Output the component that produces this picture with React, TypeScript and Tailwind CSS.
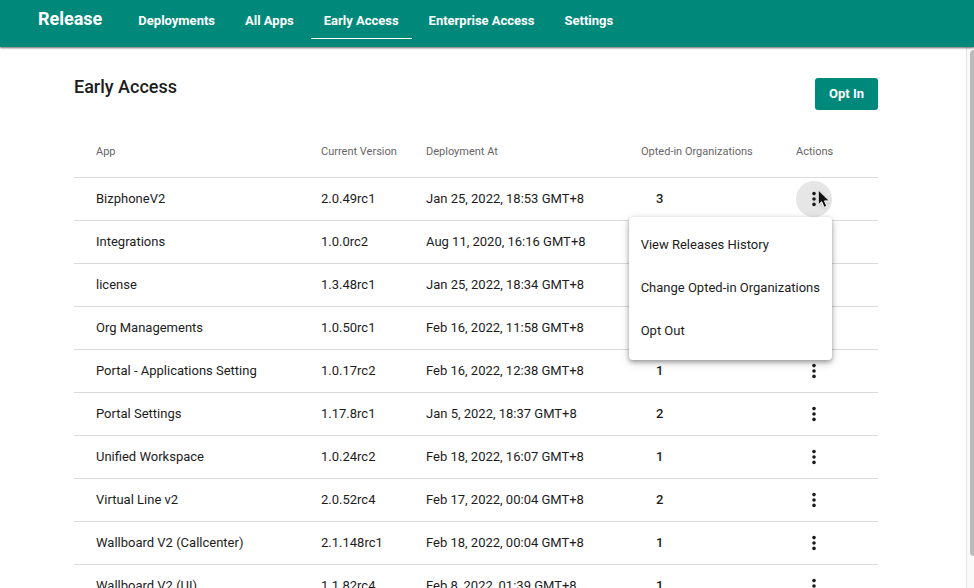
import clsx from 'clsx'

interface Deployment {
  app: string
  version: string
  deployedAt: string
  organizations: number
}

const navItems = ['Deployments', 'All Apps', 'Early Access', 'Enterprise Access', 'Settings']

const menuItems = ['View Releases History', 'Change Opted-in Organizations', 'Opt Out']

const deployments: Deployment[] = [
  { app: 'BizphoneV2', version: '2.0.49rc1', deployedAt: 'Jan 25, 2022, 18:53 GMT+8', organizations: 3 },
  { app: 'Integrations', version: '1.0.0rc2', deployedAt: 'Aug 11, 2020, 16:16 GMT+8', organizations: 1 },
  { app: 'license', version: '1.3.48rc1', deployedAt: 'Jan 25, 2022, 18:34 GMT+8', organizations: 1 },
  { app: 'Org Managements', version: '1.0.50rc1', deployedAt: 'Feb 16, 2022, 11:58 GMT+8', organizations: 1 },
  { app: 'Portal - Applications Setting', version: '1.0.17rc2', deployedAt: 'Feb 16, 2022, 12:38 GMT+8', organizations: 1 },
  { app: 'Portal Settings', version: '1.17.8rc1', deployedAt: 'Jan 5, 2022, 18:37 GMT+8', organizations: 2 },
  { app: 'Unified Workspace', version: '1.0.24rc2', deployedAt: 'Feb 18, 2022, 16:07 GMT+8', organizations: 1 },
  { app: 'Virtual Line v2', version: '2.0.52rc4', deployedAt: 'Feb 17, 2022, 00:04 GMT+8', organizations: 2 },
  { app: 'Wallboard V2 (Callcenter)', version: '2.1.148rc1', deployedAt: 'Feb 18, 2022, 00:04 GMT+8', organizations: 1 },
  { app: 'Wallboard V2 (UI)', version: '1.1.82rc4', deployedAt: 'Feb 8, 2022, 01:39 GMT+8', organizations: 1 },
]

function DotsIcon() {
  return (
    <svg viewBox="0 0 22 22" className="h-[22px] w-[22px]" fill="currentColor" aria-hidden="true">
      <circle cx="11" cy="5.6" r="1.8" />
      <circle cx="11" cy="11" r="1.8" />
      <circle cx="11" cy="16.4" r="1.8" />
    </svg>
  )
}

function Pointer() {
  return (
    <svg
      viewBox="0 0 14 20"
      className="pointer-events-none absolute top-2 left-[21px] z-20 h-5 w-3.5 drop-shadow-sm"
      aria-hidden="true"
    >
      <path
        d="M1.2 0.8v15.2l3.5-3.2 2.4 5.6 2.8-1.2-2.4-5.3h5z"
        fill="#111"
        stroke="#fff"
        strokeWidth="1"
      />
    </svg>
  )
}

function ActionsMenu() {
  return (
    <div
      role="menu"
      className="absolute top-full right-0 z-10 flex flex-col rounded bg-white py-[7px] shadow-[0_2px_4px_rgba(0,0,0,0.3),0_3px_10px_rgba(0,0,0,0.18)]"
    >
      {menuItems.map((item) => (
        <button key={item} role="menuitem" className="h-[43px] px-3 text-left whitespace-nowrap">
          {item}
        </button>
      ))}
    </div>
  )
}

function Header() {
  return (
    <header className="relative z-30 flex h-[47px] shrink-0 items-start bg-[#00897b] pl-[38px] text-white shadow-[0_1px_2px_rgba(0,0,0,0.6)]">
      <a href="#" className="text-lg leading-[38px] font-bold">
        Release
      </a>
      <nav className="ml-[23px] flex gap-1">
        {navItems.map((item) => (
          <a
            key={item}
            href="#"
            className={clsx(
              'border-b px-[13px] pt-[3px] leading-[35px] font-bold',
              item === 'Early Access' ? 'border-white' : 'border-transparent',
            )}
          >
            {item}
          </a>
        ))}
      </nav>
    </header>
  )
}

function DeploymentRow({ deployment, open }: { deployment: Deployment; open: boolean }) {
  return (
    <tr className="h-[43px] border-b border-[#dadada]">
      <td className="pl-[22px]">{deployment.app}</td>
      <td className="pl-[22px]">{deployment.version}</td>
      <td className="pl-[22px]">{deployment.deployedAt}</td>
      <td className="pl-[22px]">
        {/* The open menu covers the counts of the rows below it */}
        <button className="px-[15px] font-medium">{deployment.organizations}</button>
      </td>
      <td className="pl-[22px]">
        <div className="relative h-9 w-9">
          <button
            aria-label={`Actions for ${deployment.app}`}
            className={clsx('flex h-9 w-9 items-center justify-center rounded-full', open && 'bg-[#e6e6e6]')}
          >
            <DotsIcon />
          </button>
          {open && <Pointer />}
          {open && <ActionsMenu />}
        </div>
      </td>
    </tr>
  )
}

export default function App() {
  return (
    <div className="flex h-screen flex-col overflow-hidden bg-white font-['Roboto',sans-serif] text-[13px] text-[#1c1c1c]">
      <Header />
      <div className="flex min-h-0 flex-1">
        <main className="min-w-0 flex-1 overflow-hidden pt-[31px] pr-[88px] pl-[74px]">
          <div className="flex items-start justify-between">
            <h1 className="text-lg leading-[18px] font-medium">Early Access</h1>
            <button className="h-8 rounded-[3px] bg-[#00897b] px-[14px] font-bold text-white">Opt In</button>
          </div>

          <table className="mt-[18px] w-full table-fixed border-collapse">
            <colgroup>
              <col />
              <col className="w-[105px]" />
              <col className="w-[215px]" />
              <col className="w-[155px]" />
              <col className="w-[104px]" />
            </colgroup>
            <thead>
              <tr className="h-[49px] border-b border-[#dadada] text-left text-[11px] whitespace-nowrap text-[#666]">
                <th className="pl-[22px] font-normal">App</th>
                <th className="pl-[22px] font-normal">Current Version</th>
                <th className="pl-[22px] font-normal">Deployment At</th>
                <th className="pl-[22px] font-normal">Opted-in Organizations</th>
                <th className="pl-[22px] font-normal">Actions</th>
              </tr>
            </thead>
            <tbody>
              {deployments.map((deployment, index) => (
                <DeploymentRow key={deployment.app} deployment={deployment} open={index === 0} />
              ))}
            </tbody>
          </table>
        </main>

        {/* Scroll track */}
        <div className="w-2 shrink-0 border-l border-[#e4e4e4] bg-[#fafafa] pt-[3px] pb-8 pl-[3px]">
          <div className="h-full rounded-l bg-[#bababa]" />
        </div>
      </div>
    </div>
  )
}
